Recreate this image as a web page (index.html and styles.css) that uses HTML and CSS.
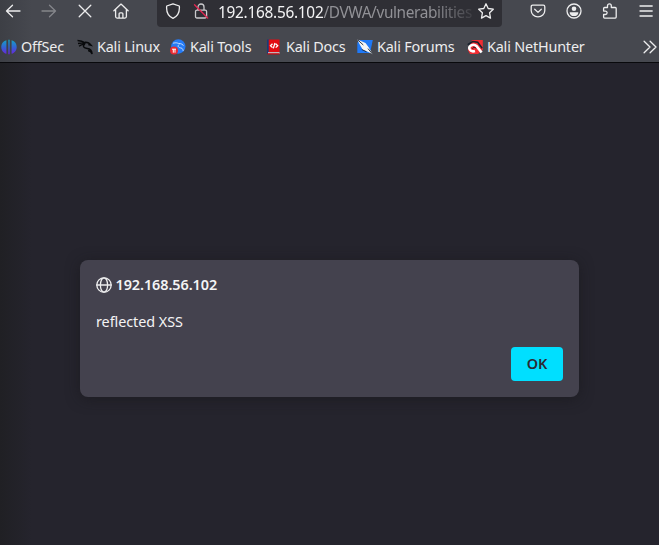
FILE: index.html
```html
<!DOCTYPE html>
<html lang="en">
<head>
<meta charset="utf-8">
<title>192.168.56.102</title>
<link rel="stylesheet" href="styles.css">
</head>
<body>
<div class="browser">
  <header class="chrome">
    <div class="nav">
      <div class="nav-buttons">
        <svg class="ico" viewBox="0 0 16 16"><path d="M15 8H1.5M7.5 2.2L1.5 8l6 5.800"/></svg>
        <svg class="ico dim" viewBox="0 0 16 16"><path d="M1 8h13.5M8.5 2.200l6 5.800-6 5.800"/></svg>
        <svg class="ico" viewBox="0 0 16 16"><path d="M2.2 2.2l11.6 11.6M13.8 2.2L2.2 13.8"/></svg>
        <svg class="ico" viewBox="0 0 16 16"><path d="M.9 7.7L8 1.1l7.1 6.6M2.6 6.4v7.2q0 1.500 1.500 1.500h7.800q1.500 0 1.500-1.500V6.400M6.100 15v-4.200q0-1 1-1h1.800q1 0 1 1V15"/></svg>
      </div>
      <div class="url">
        <svg class="ico" viewBox="0 0 16 16"><path d="M8 .8L14.3 3c.5 4.800-.8 9.800-6.300 12.400C2.500 12.800 1.200 7.800 1.700 3z"/></svg>
        <svg class="ico lock" viewBox="0 0 16 16"><path d="M5 7V4a3 3 0 0 1 6 0v3M4 7.200h8.300q1.300 0 1.300 1.300v5q0 1.500-1.500 1.500H4q-1.500 0-1.500-1.500v-5q0-1.300 1.500-1.300z"/><path class="slash" d="M1.500 1.700L14.700 15"/></svg>
        <div class="address"><b>192.168.56.102</b>/DVWA/vulnerabilities</div>
        <svg class="ico star" viewBox="0 0 16 16"><path d="M8 .8l2.200 4.700 5.100.7-3.700 3.600.9 5.300L8 12.600l-4.500 2.500.9-5.300L.7 6.200l5.100-.7z"/></svg>
      </div>
      <div class="actions">
        <svg class="ico" viewBox="0 0 16 16"><path d="M2.700 2.200h10.600q1.500 0 1.500 1.500v3.800a6.800 6.300 0 0 1-13.600 0V3.700q0-1.500 1.500-1.500zM4.700 6.300L8 9.400l3.300-3.100"/></svg>
        <svg class="ico" viewBox="0 0 16 16"><circle cx="8" cy="8" r="7"/><circle class="solid" cx="8" cy="5.800" r="2.300"/><path class="solid" d="M3.700 9.200h8.600c0 2.600-1.800 3.900-4.300 3.900s-4.300-1.300-4.300-3.900z"/></svg>
        <svg class="ico" viewBox="0 0 16 16"><path d="M1.600 5.500q0-1 1-1h2.900V2.800a1.900 1.900 0 0 1 3.800 0v1.700h3.900q1 0 1 1v8.600q0 1-1 1H2.600q-1 0-1-1v-2.600h1.800a1.700 1.700 0 0 0 0-3.400H1.600z"/></svg>
        <svg class="ico" viewBox="0 0 16 16"><path d="M2 3h12.200M2 8h12.200M2 13h12.200"/></svg>
      </div>
    </div>
    <nav class="bookmarks">
      <a class="mark offsec"><svg viewBox="0 0 16 16"><defs><linearGradient id="og" gradientUnits="userSpaceOnUse" x1="0" y1="1" x2="0" y2="15"><stop offset="0" stop-color="#15a2c4"/><stop offset=".5" stop-color="#3166d4"/><stop offset="1" stop-color="#6826dc"/></linearGradient></defs><path fill="url(#og)" d="M5.400 1.200v13.600C-1.400 13.300-1.400 2.700 5.400 1.200zM7.300.7h1.400v14.600H7.300zM10.600 1.200c6.800 1.500 6.800 12.100 0 13.600z"/></svg><span>OffSec</span></a>
      <a class="mark linux"><svg viewBox="0 0 16 16"><path class="dragon" d="M.5 1.500c4 0 6 1.200 8.300 2.700M1 4.500c3-.5 5.400-.6 7.400.3M2 7.200c2-1.500 4-2 6-1.700M8 3.200c3.100-.2 4.700 1 6.300 3.100l-3-.7M7.900 4.700c-2.800 2.500-1.200 4.600 2.300 4.800 3.500.2 4.800 2 4.900 5.600-.8-2.400-2-3.300-4-3.600"/></svg><span>Kali Linux</span></a>
      <a class="mark tools"><svg viewBox="0 0 16 16"><circle cx="8.300" cy="7.500" r="7.200" fill="#257bf5"/><path class="white-line thin" d="M3 4.200c3-.8 5-.3 6.500.8M9 4.500c2.500 0 4 1.100 4.400 2.200M8.600 5.700c-1.400 2.300.8 3 2.500 3.300 1.500.3 2 1.600 2.100 3"/><circle cx="4" cy="11.600" r="4" fill="#e82931"/><path class="white-line" d="M2 10.200h4M3.300 10.200v3.500M5 10.200v3.500"/></svg><span>Kali Tools</span></a>
      <a class="mark docs"><svg viewBox="0 0 16 16"><path fill="#173c78" d="M1 .5h3V15H1z"/><path fill="#e30b12" d="M2.700.5h10.800v12.700H2.700z"/><path fill="#d9d4d8" d="M2 13.200h11.500V15H2z"/><path fill="#c30910" d="M1.500 14.200h12v1.300h-12z"/><path class="white-line symbol" d="M6.500 4.800L4.500 6.700l2 1.900M9.700 4.800l2 1.900-2 1.900M9 4L7.300 9.400"/></svg><span>Kali Docs</span></a>
      <a class="mark forums"><svg viewBox="0 0 16 16"><path fill="#1f79f7" d="M2 1h13.800L13 14H.3V4z"/><path d="M.3.500l8.200 3.500 3.300 4.600 4 6.700-5-2.500-4.900-1.900L3 6z" fill="#f5f5f5"/><path class="ink" d="M.8 1l5.500 5M4.800 10.500l4.700 2.300M11 9.600l4.400 5.300"/></svg><span>Kali Forums</span></a>
      <a class="mark hunter"><svg viewBox="0 0 16 16"><path fill="#f12c32" d="M5 1h10.800v10L11 15H3L.8 11z"/><path class="ink thick" d="M.7 5.700l5-3.200 5 .8 4.500 6"/><path class="hook" d="M14.600 13.500L9.400 7C6.300 4 1 7.200 2.500 10c1 2 3.500 2.600 5.500 2"/><path class="ink" d="M9.200 9.200c-2-1.400-4-.8-3.400.8"/></svg><span>Kali NetHunter</span></a>
      <svg class="ico more" viewBox="0 0 16 16"><path d="M2.100 2.200L8 8l-5.900 5.800M8.100 2.200L14 8l-5.900 5.800"/></svg>
    </nav>
  </header>
  <main class="page">
    <section class="dialog">
      <div class="title"><svg class="ico" viewBox="0 0 16 16"><circle cx="8" cy="8" r="7.200"/><ellipse cx="8" cy="8" rx="3.600" ry="7.200"/><path d="M.8 8h14.400"/></svg><span>192.168.56.102</span></div>
      <p class="message"><span>reflected XSS</span></p>
      <button class="ok">OK</button>
    </section>
  </main>
</div>
</body>
</html>
```
FILE: styles.css
```css
* { box-sizing: border-box; }
body { margin: 0; background: #25242d; color: #f4f4f5; font: 14.4px/20px "Noto Sans", sans-serif; }
.browser { height: 545px; overflow: hidden; display: flex; flex-direction: column; }
.chrome { height: 63px; flex: none; background: linear-gradient(90deg, #3d3f45, #46484f 32px); border-bottom: 1px solid #09090c; }
.nav { height: 27px; display: flex; }
.ico { width: 16px; height: 16px; flex: none; fill: none; stroke: #ededee; stroke-width: 1.3; stroke-linecap: round; stroke-linejoin: round; }
.dim { stroke: #85868b; }
.nav-buttons { width: 157px; padding: 3px 0 0 5px; display: flex; gap: 20px; }
.url { width: 345px; height: 27px; background: #2f2f35; border-radius: 0 0 4px 4px; padding: 3px 8px; display: flex; }
.lock { margin-left: 12px; stroke: #c9c9cc; }
.lock .slash { stroke: #e32651; }
.address { width: 259px; height: 24px; margin: -1px 0 0 9px; font-size: 15.4px; line-height: 22px; white-space: nowrap; color: #919196; letter-spacing: -.38px; -webkit-mask-image: linear-gradient(90deg, #000 214px, transparent 262px); mask-image: linear-gradient(90deg, #000 214px, transparent 262px); }
.address b { color: #f4f4f5; font-weight: 400; letter-spacing: -.27px; }
.star { margin-left: 1px; }
.actions { padding: 3px 0 0 28px; display: flex; gap: 20px; }
.bookmarks { height: 35px; padding: 4px 0 0 1px; display: flex; align-items: center; letter-spacing: -.18px; }
.mark { display: flex; align-items: center; gap: 4px; white-space: nowrap; flex: none; color: #ededee; }
.mark svg { width: 16px; height: 16px; flex: none; }
.offsec { width: 76px; }
.linux { width: 93px; }
.tools { width: 96px; }
.docs { width: 91px; }
.forums { width: 110px; }
.hunter { width: 175px; }
.dragon { fill: none; stroke: #08090b; stroke-width: 1.4; }
.white-line { fill: none; stroke: #fff; stroke-width: 1; }
.thin { stroke-width: .7; }
.symbol { stroke-width: 1.3; }
.ink { fill: none; stroke: #17212c; stroke-width: .9; }
.thick { stroke-width: 1.5; }
.hook { fill: none; stroke: #fff; stroke-width: 2.6; }
.solid { fill: #ededee; stroke: none; }
.page { flex: 1; padding: 197px 80px 0; background: linear-gradient(90deg, #202024, #25242d 32px); }
.dialog { width: 499px; height: 137px; padding: 15px 16px 16px; background: #44424e; border-radius: 8px; box-shadow: 0 2px 14px #17171b99; display: flex; flex-direction: column; }
.title { height: 20px; display: flex; align-items: center; gap: 3.5px; font-weight: 600; letter-spacing: -.06px; }
.message { margin: 17px 0 15px; letter-spacing: -.06px; }
.ok { width: 52px; height: 34px; padding: 0; align-self: flex-end; border: 0; border-radius: 4px; background: #00dfff; color: #2b2a33; font: 600 14.4px/20px "Noto Sans", sans-serif; }
```
